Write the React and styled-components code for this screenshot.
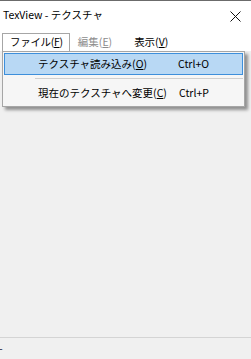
import React from "react";
import styled, { createGlobalStyle } from "styled-components";

const Global = createGlobalStyle`
  html, body { margin: 0; padding: 0; background: #f0f0f0; }
  body { font-family: "Noto Sans CJK JP", "Noto Sans", sans-serif; }
  #root { width: 251px; height: 359px; overflow: hidden; }
`;

const Window = styled.div`
  position: relative;
  display: flex;
  flex-direction: column;
  width: 251px;
  height: 359px;
  background: #f0f0f0;
  font-size: 10.5px;
  color: #000;
`;

const TitleBar = styled.div`
  display: flex;
  align-items: center;
  justify-content: space-between;
  height: 30px;
  border-top: 1px solid #6b6b6b;
  background: #fff;
  padding: 0 10px 0 3px;
  box-sizing: content-box;
`;

const TitleText = styled.span`
  font-size: 10.5px;
  line-height: 1;
  margin-top: -1px;
`;

const CloseIcon = styled.svg`
  width: 11px;
  height: 11px;
  display: block;
`;

const MenuBar = styled.div`
  display: flex;
  align-items: stretch;
  height: 20px;
  background: #fff;
  padding: 0 0 0 2px;
  font-size: 10.5px;
`;

const MenuItem = styled.div`
  display: flex;
  align-items: center;
  padding: 0 ${(p) => p.$pad}px 0 ${(p) => p.$padL}px;
  margin-top: 2px;
  color: ${(p) => (p.$disabled ? "#8d8d8d" : "#000")};
  border: 1px solid ${(p) => (p.$open ? "#a6a6a6" : "transparent")};
  border-bottom: none;
  line-height: 1;
  position: relative;
  z-index: 2;
  background: ${(p) => (p.$open ? "#fff" : "transparent")};
  white-space: nowrap;
  letter-spacing: ${(p) => (p.$tight ? "-0.3px" : "0")};
`;

const Key = styled.span`
  text-decoration: underline;
  text-underline-offset: 1px;
`;

const Client = styled.div`
  flex: 1;
  background: #f0f0f0;
`;

const StatusBar = styled.div`
  height: 22px;
  border-top: 1px solid #d4d4d4;
  display: flex;
  align-items: center;
  padding-bottom: 2px;
  box-sizing: border-box;
  font-size: 10.5px;
`;

const StatusText = styled.span`
  margin-left: -1px;
  color: #1a1a3a;
`;

const Popup = styled.div`
  position: absolute;
  left: 2px;
  top: 51px;
  width: 239px;
  border: 1px solid #a6a6a6;
  background: #f6f6f6;
  box-shadow: 3px 3px 3px rgba(0, 0, 0, 0.4);
  padding: 1px 1px 2px 1px;
  z-index: 1;
`;

const PopupRow = styled.div`
  display: grid;
  grid-template-columns: 140px 1fr;
  align-items: center;
  height: 20px;
  padding-left: 33px;
  border: 1px solid ${(p) => (p.$hot ? "#3d8fdb" : "transparent")};
  background: ${(p) => (p.$hot ? "#b8d8f4" : "transparent")};
  line-height: 1;
  white-space: nowrap;
`;

const Shortcut = styled.span`
  padding-left: ${(p) => p.$off || 0}px;
`;

const Separator = styled.div`
  height: 1px;
  background: #cfcfcf;
  margin: 3px 0 3px 31px;
`;

export default function App() {
  return (
    <>
      <Global />
      <Window>
        <TitleBar>
          <TitleText>TexView - テクスチャ</TitleText>
          <CloseIcon viewBox="0 0 11 11">
            <path d="M0.5 0.5 L10.5 10.5 M10.5 0.5 L0.5 10.5" stroke="#111" strokeWidth="1" fill="none" />
          </CloseIcon>
        </TitleBar>
        <MenuBar>
          <MenuItem $open $tight $padL={7} $pad={6}>
            ファイル(<Key>F</Key>)
          </MenuItem>
          <MenuItem $disabled $padL={7} $pad={11}>
            編集(<Key>E</Key>)
          </MenuItem>
          <MenuItem $padL={9} $pad={8}>
            表示(<Key>V</Key>)
          </MenuItem>
        </MenuBar>
        <Client />
        <StatusBar>
          <StatusText>-</StatusText>
        </StatusBar>
        <Popup>
          <PopupRow $hot>
            <span>
              テクスチャ読み込み(<Key>O</Key>)
            </span>
            <Shortcut>Ctrl+O</Shortcut>
          </PopupRow>
          <Separator />
          <PopupRow>
            <span>
              現在のテクスチャへ変更(<Key>C</Key>)
            </span>
            <Shortcut $off={1}>Ctrl+P</Shortcut>
          </PopupRow>
        </Popup>
      </Window>
    </>
  );
}
